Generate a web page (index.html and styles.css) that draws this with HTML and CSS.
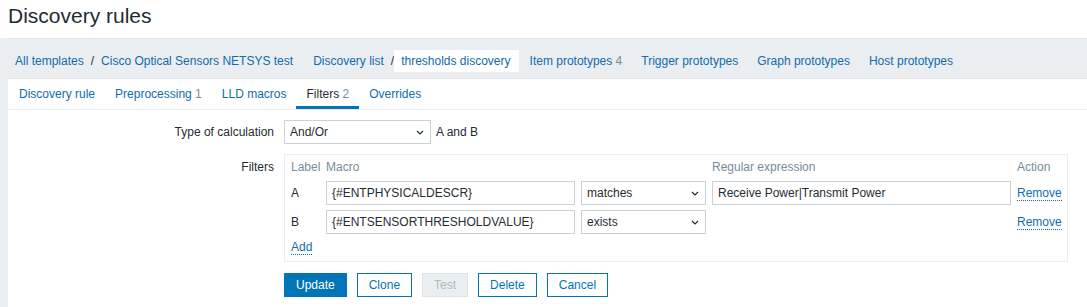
FILE: index.html
```html
<!DOCTYPE html>
<html lang="en">
<head>
    <meta charset="UTF-8">
    <title>Discovery rules</title>
    <link rel="stylesheet" href="styles.css">
</head>
<body>
    <header class="page-header">
        <h1>Discovery rules</h1>
    </header>
    <div class="wrapper">
        <ul class="breadcrumbs">
            <li>
                <a href="#">All templates</a><span class="sep">/</span><a href="#">Cisco Optical Sensors NETSYS test</a>
            </li>
            <li>
                <a href="#">Discovery list</a><span class="sep sep-tight">/</span><span class="selected">thresholds discovery</span>
            </li>
            <li><a href="#">Item prototypes</a> <span class="count">4</span></li>
            <li><a href="#">Trigger prototypes</a></li>
            <li><a href="#">Graph prototypes</a></li>
            <li><a href="#">Host prototypes</a></li>
        </ul>

        <div class="content">
            <ul class="tabs">
                <li><a href="#">Discovery rule</a></li>
                <li><a href="#">Preprocessing</a> <span class="count">1</span></li>
                <li><a href="#">LLD macros</a></li>
                <li class="active"><a href="#">Filters</a> <span class="count">2</span></li>
                <li><a href="#">Overrides</a></li>
            </ul>

            <form class="form" onsubmit="return false">
                <div class="form-row row-calc">
                    <label class="form-label">Type of calculation</label>
                    <div class="form-field">
                        <div class="select calc-select">And/Or
                            <svg class="chevron" viewBox="0 0 8 5" width="8" height="5"><path d="M1 1l3 3 3-3" fill="none" stroke="#1f2c33" stroke-width="1.2"/></svg>
                        </div>
                        <span class="formula">A and B</span>
                    </div>
                </div>

                <div class="form-row row-filters">
                    <label class="form-label">Filters</label>
                    <div class="form-field">
                        <div class="filter-table">
                            <div class="th">Label</div>
                            <div class="th">Macro</div>
                            <div class="th"></div>
                            <div class="th">Regular expression</div>
                            <div class="th">Action</div>

                            <div class="cell">A</div>
                            <div class="input">{#ENTPHYSICALDESCR}</div>
                            <div class="select">matches
                                <svg class="chevron" viewBox="0 0 8 5" width="8" height="5"><path d="M1 1l3 3 3-3" fill="none" stroke="#1f2c33" stroke-width="1.2"/></svg>
                            </div>
                            <div class="input">Receive Power|Transmit Power</div>
                            <div class="cell"><a href="#" class="link-action">Remove</a></div>

                            <div class="cell">B</div>
                            <div class="input">{#ENTSENSORTHRESHOLDVALUE}</div>
                            <div class="select">exists
                                <svg class="chevron" viewBox="0 0 8 5" width="8" height="5"><path d="M1 1l3 3 3-3" fill="none" stroke="#1f2c33" stroke-width="1.2"/></svg>
                            </div>
                            <div class="cell"></div>
                            <div class="cell"><a href="#" class="link-action">Remove</a></div>

                            <div class="add-row"><a href="#" class="link-action">Add</a></div>
                        </div>
                    </div>
                </div>

                <div class="form-buttons">
                    <button class="btn btn-primary">Update</button>
                    <button class="btn">Clone</button>
                    <button class="btn" disabled>Test</button>
                    <button class="btn">Delete</button>
                    <button class="btn">Cancel</button>
                </div>
            </form>
        </div>
    </div>
</body>
</html>
```
FILE: styles.css
```css
body {
    margin: 0;
    font-family: "Liberation Sans", Arial, sans-serif;
    font-size: 12px;
    line-height: 14px;
    color: #1f2c33;
    background-color: #ebeef0;
}
a {
    color: #0f6cae;
    text-decoration: none;
}
.page-header {
    background-color: #fff;
    height: 38px;
    padding: 4px 8px 0;
    box-sizing: border-box;
}
.page-header h1 {
    margin: 0;
    font-size: 21px;
    line-height: 24px;
    font-weight: normal;
}
.wrapper {
    padding-left: 8px;
}
.breadcrumbs {
    list-style: none;
    margin: 0;
    padding: 11px 0 6px 0;
    display: flex;
    align-items: center;
    border-top: 1px solid #e2e6e9;
}
.breadcrumbs li {
    padding: 4px 8px;
    margin-right: 3px;
    white-space: nowrap;
}
.breadcrumbs li:first-child {
    padding-left: 7px;
    margin-right: 4px;
}
.breadcrumbs .sep {
    margin: 0 7px;
    color: #1f2c33;
}
.breadcrumbs .sep-tight {
    margin-right: 0;
}
.breadcrumbs .selected {
    background-color: #fff;
    color: #0f6cae;
    padding: 4px 8px 4px 7px;
    margin-right: -8px;
}
.count {
    color: #768d99;
}
.content {
    background-color: #fff;
    min-height: 229px;
    border-top: 1px solid #e2e6e9;
}
.tabs {
    list-style: none;
    margin: 0;
    padding: 0 0 0 1px;
    display: flex;
    border-bottom: 1px solid #ebeef0;
}
.tabs li {
    padding: 8px 10px 5px;
    border-bottom: 3px solid transparent;
}
.tabs li.active {
    border-bottom-color: #0275b8;
}
.tabs li.active a {
    color: #1f2c33;
}
.form {
    padding-top: 10px;
}
.form-row {
    display: flex;
    align-items: flex-start;
}
.form-label {
    width: 276px;
    padding-right: 10px;
    text-align: right;
    box-sizing: border-box;
    flex-shrink: 0;
}
.form-field {
    display: flex;
    align-items: center;
}
.row-calc .form-label {
    line-height: 24px;
}
.row-filters {
    margin-top: 10px;
}
.row-filters .form-label {
    padding-top: 6px;
}
.select,
.input {
    height: 24px;
    border: 1px solid #c9d1d6;
    box-sizing: border-box;
    padding: 0 5px;
    line-height: 22px;
    background-color: #fff;
    white-space: nowrap;
}
.select {
    position: relative;
}
.select .chevron {
    position: absolute;
    right: 6px;
    top: 9px;
}
.calc-select {
    width: 147px;
}
.formula {
    margin-left: 5px;
}
.filter-table {
    display: grid;
    grid-template-columns: 29px 249px 125px 299px auto;
    column-gap: 6px;
    row-gap: 5px;
    border: 1px solid #ebeef0;
    padding: 5px 5px 5px 6px;
}
.filter-table .th {
    color: #768d99;
    height: 16px;
    white-space: nowrap;
}
.filter-table .cell {
    line-height: 24px;
}
.link-action {
    border-bottom: 1px dotted #0f6cae;
    line-height: 14px;
}
.add-row {
    grid-column: 1 / -1;
    padding-top: 1px;
    height: 16px;
}
.form-buttons {
    padding: 11px 0 0 276px;
    display: flex;
}
.btn {
    height: 24px;
    padding: 0 11px;
    margin-right: 10px;
    border: 1px solid #0275b8;
    background-color: #fff;
    color: #0275b8;
    font-family: inherit;
    font-size: 12px;
    cursor: pointer;
}
.btn-primary {
    background-color: #0275b8;
    color: #fff;
}
.btn:disabled {
    background-color: #ebeef0;
    border-color: #dfe4e7;
    color: #acbbc2;
    cursor: default;
}
```
